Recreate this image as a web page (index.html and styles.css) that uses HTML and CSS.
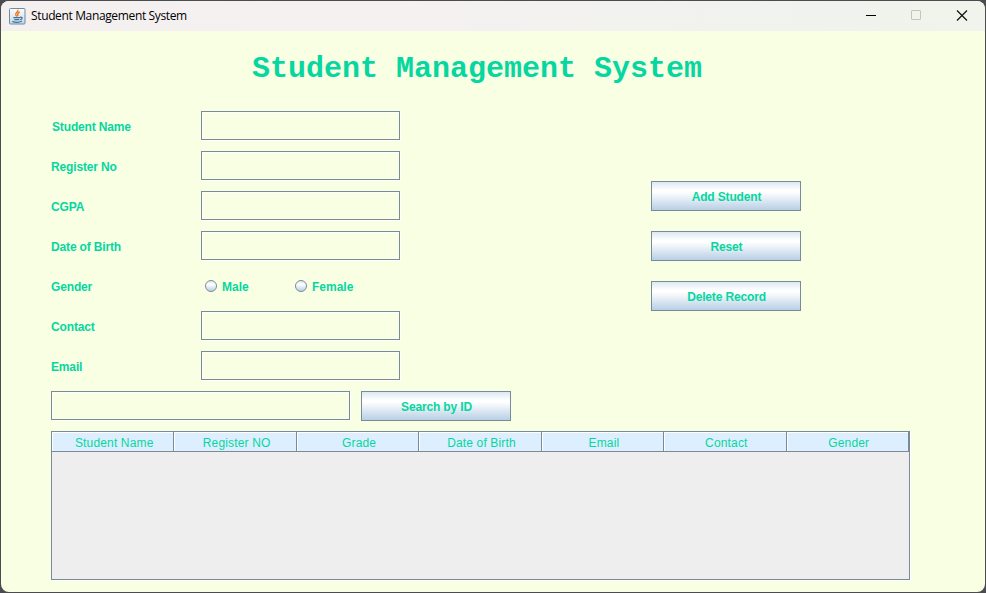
FILE: index.html
```html
<!DOCTYPE html>
<html lang="en">
<head>
<meta charset="utf-8">
<title>Student Management System</title>
<link rel="stylesheet" href="styles.css">
</head>
<body>
<div class="window">
  <header class="titlebar">
    <svg class="app-icon" width="17" height="17" viewBox="0 0 17 17">
      <defs><linearGradient id="tile" x1="0" y1="0" x2="0" y2="1"><stop offset="0" stop-color="#fdfdfd"/><stop offset="1" stop-color="#c6d8e6"/></linearGradient></defs>
      <rect x=".5" y=".5" width="15.5" height="15.5" rx="1" fill="url(#tile)" stroke="#6c8ba4"/>
      <path d="M8.800 1.800C9.800 4 5.500 5 6.800 7l1.200 1.500M10.800 4C8 5 8.500 6.500 9 8.300" fill="none" stroke="#ed7d25" stroke-width="1.400"/>
      <path d="M4.300 9.500h6.700M5.300 11.500h5M11 9.300c3-.6 2.500 1.900.3 2.400M3.300 13.300c3 1.200 7 1.200 9.700-.3" fill="none" stroke="#3f739e" stroke-width="1.250"/>
    </svg>
    <span class="caption">Student Management System</span>
    <svg class="controls" width="125" height="30" viewBox="0 0 125 30">
      <path d="M6 14.500h10" stroke="#000"/>
      <rect x="51.500" y="9.500" width="9" height="9" rx=".5" fill="none" stroke="#c3c5c0"/>
      <path d="M97 9.500l10 10M107 9.500l-10 10" stroke="#111" stroke-width="1.200"/>
    </svg>
  </header>
  <main class="content">
    <h1 class="heading">Student Management System</h1>
    <div class="top">
      <form class="form">
        <label class="label name">Student Name</label><div class="field"></div>
        <label class="label">Register No</label><div class="field"></div>
        <label class="label">CGPA</label><div class="field"></div>
        <label class="label">Date of Birth</label><div class="field"></div>
        <label class="label">Gender</label>
        <div class="radios">
          <span class="radio"><i class="dot"></i>Male</span>
          <span class="radio"><i class="dot"></i>Female</span>
        </div>
        <label class="label">Contact</label><div class="field"></div>
        <label class="label">Email</label><div class="field"></div>
      </form>
      <div class="actions">
        <button class="btn">Add Student</button>
        <button class="btn">Reset</button>
        <button class="btn">Delete Record</button>
      </div>
    </div>
    <div class="search">
      <div class="field"></div>
      <button class="btn">Search by ID</button>
    </div>
    <div class="table">
      <div class="thead">
        <div class="th">Student Name</div>
        <div class="th">Register NO</div>
        <div class="th">Grade</div>
        <div class="th">Date of Birth</div>
        <div class="th">Email</div>
        <div class="th">Contact</div>
        <div class="th">Gender</div>
      </div>
    </div>
  </main>
</div>
</body>
</html>
```
FILE: styles.css
```css
* { box-sizing: border-box; }
body {
  margin: 0;
  width: 986px;
  height: 593px;
  overflow: hidden;
  background: #4b4c50;
  padding: 1px;
  font: bold 12px "Liberation Sans", Arial, sans-serif;
  color: #06d6a0;
}
.window {
  width: 984px;
  height: 591px;
  border-radius: 8px;
  overflow: hidden;
  background: #f9ffe3;
}
.titlebar {
  height: 30px;
  display: flex;
  align-items: center;
  padding-left: 8px;
  background: linear-gradient(90deg, #f5f0f0 0%, #f5f1f1 35%, #f0f3ed 85%, #f0f4ec 100%);
}
.caption {
  font: 12px "Open Sans", "Noto Sans", sans-serif;
  letter-spacing: -0.36px;
  color: #000;
  margin: -1px 0 0 5px;
  flex: 1;
}
.content { padding: 20px 0 0 50px; }
.heading {
  margin: 0;
  height: 60px;
  padding: 1px 0 0 201px;
  font: bold 30px/34px "Courier New", "Liberation Mono", monospace;
}
.top { display: flex; }
.form {
  display: grid;
  grid-template-columns: 150px 200px;
  grid-auto-rows: 30px;
  row-gap: 10px;
}
.label { line-height: 33px; letter-spacing: -0.15px; }
.name { padding-left: 1px; }
.field {
  width: 199px;
  height: 29px;
  border: 1px solid #7a8a99;
  box-shadow: 1px 1px 0 #fff, inset 1px 1px 0 #fff;
}
.radios { display: flex; padding-left: 4px; }
.radio { width: 90px; display: flex; line-height: 33px; }
.dot {
  width: 12px;
  height: 12px;
  margin: 9px 5px 0 0;
  border: 1px solid #7a8a99;
  border-radius: 50%;
  background: linear-gradient(#dde8f3, #fff 35%, #b8cfe5);
}
.actions {
  display: flex;
  flex-direction: column;
  gap: 20px;
  margin: 70px 0 0 250px;
}
.btn {
  width: 150px;
  height: 30px;
  padding: 1px 0 0 1px;
  border: 1px solid #7a8a99;
  background: linear-gradient(#dde8f3 0%, #fff 30%, #fff 36%, #b8cfe5 100%);
  color: inherit;
  font: inherit;
  letter-spacing: -0.15px;
}
.search { display: flex; gap: 11px; margin-top: 10px; }
.search .field { width: 299px; }
.table {
  width: 859px;
  height: 149px;
  margin-top: 10px;
  border: 1px solid #7a8a99;
  background: #eee;
  box-shadow: 1px 1px 0 #fff;
}
.thead { display: flex; height: 20px; }
.th {
  flex: 1;
  padding-left: 3px;
  border: solid #7a8a99;
  border-width: 0 1px 1px 0;
  background: #def;
  box-shadow: inset 1px 1px 0 #fff;
  text-align: center;
  font-weight: normal;
  letter-spacing: 0.15px;
  line-height: 22px;
}
```
